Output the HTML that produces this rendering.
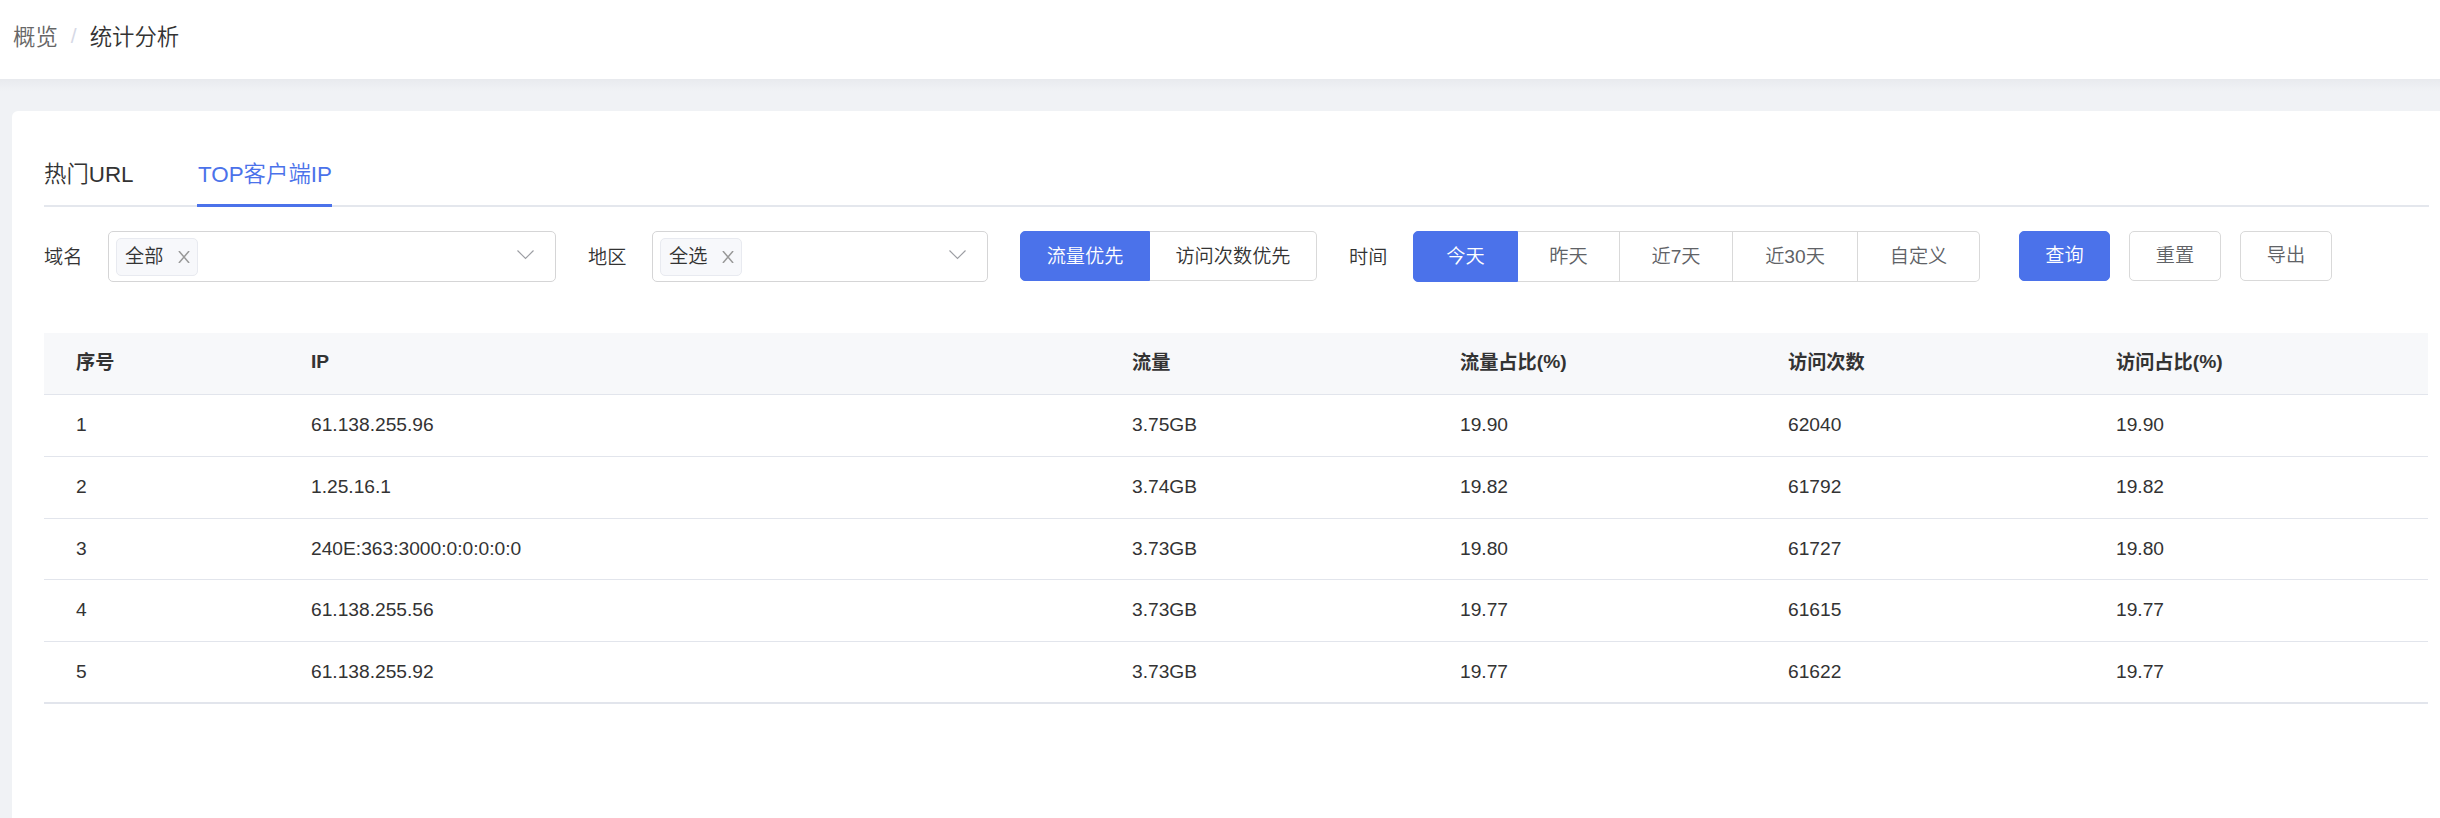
<!DOCTYPE html>
<html lang="zh-CN">
<head>
<meta charset="utf-8">
<title>统计分析</title>
<style>
*{box-sizing:border-box;margin:0;padding:0}
html,body{width:2440px;height:818px;overflow:hidden}
body{background:#f0f2f5;font-family:"Liberation Sans","Noto Sans CJK SC",sans-serif;font-weight:350;color:#333;position:relative}
.hdr{position:absolute;left:0;top:0;width:2440px;height:79px;background:#fff}
.hdr-shadow{position:absolute;left:0;top:79px;width:2440px;height:12px;background:linear-gradient(#e8eaee,#f0f2f5)}
.bc{position:absolute;left:13px;top:22px;height:32px;line-height:32px;font-size:22.4px;white-space:nowrap}
.bc .a{color:#666}
.bc .s{color:#d6d9e6;margin:0 13px 0 13px;font-size:21px;position:relative;top:-2px}
.bc .b{color:#333}
.card{position:absolute;left:12px;top:111px;width:2440px;height:720px;background:#fff;border-radius:6px}
.tabs{position:absolute;left:32px;top:31px;width:2385px;height:65px}
.tabs .line{position:absolute;left:0;bottom:0;width:100%;height:2px;background:#e4e7ed}
.tabs .bar{position:absolute;left:153px;bottom:0;width:135px;height:3px;background:#4b72ea}
.tab{position:absolute;top:15px;height:36px;line-height:36px;font-size:22.4px;white-space:nowrap}
.tab.t1{left:0;color:#333}
.tab.t2{left:154px;color:#4b72ea}
.filters{position:absolute;left:32px;top:120px;height:51px;width:2384px}
.lbl{position:absolute;top:1px;height:51px;line-height:51px;font-size:19.2px;color:#333;white-space:nowrap}
.sel{position:absolute;top:0;height:51px;border:1px solid #d5d5d6;border-radius:5px;background:#fff}
.tag{position:absolute;left:7px;top:6px;width:82px;height:38px;border:1px solid #e8eaf0;background:#f7f8fb;border-radius:5px;line-height:35px;font-size:19.2px;color:#333;padding:0 0 0 8px;white-space:nowrap}
.tag svg{position:absolute;left:61px;top:12px;width:12px;height:12px}
.arrow{position:absolute;right:19px;top:17px;width:20px;height:12px}
.grp{position:absolute;top:0;height:50px;display:flex}
.gbtn{height:50px;line-height:50px;border:1px solid #d9d9d9;border-left:none;font-size:19.2px;color:#333;text-align:center;background:#fff;white-space:nowrap}
.gbtn:first-child{border-left:1px solid #d9d9d9;border-radius:5px 0 0 5px}
.gbtn:last-child{border-radius:0 5px 5px 0}
.gbtn.on{background:#4b72ea;border-color:#4b72ea;color:#fff}
.grp.g2{height:51px}
.grp.g2 .gbtn{color:#606266;height:51px}
.grp.g2 .gbtn.on{color:#fff}
.btn{position:absolute;top:0;height:50px;line-height:48px;border:1px solid #d9d9d9;border-radius:5px;font-size:19.2px;color:#606266;text-align:center;background:#fff;white-space:nowrap}
.btn.pri{background:#4b72ea;border-color:#4b72ea;color:#fff}
.tbl{position:absolute;left:32px;top:222px;width:2384px;font-size:19.2px;color:#333}
.tr{position:relative;width:2384px;border-bottom:1px solid #e2e5ec;white-space:nowrap}
.tr span{position:absolute;top:0;height:100%}
.tr.h{height:62px;line-height:58px;background:#f7f8fa;font-weight:bold;color:#333}
.tr.h span i{font-style:normal;position:relative;top:1px}
.c1{left:32px}.c2{left:267px}.c3{left:1088px}.c4{left:1416px}.c5{left:1744px}.c6{left:2072px}
.r62{height:62px;line-height:59px}
.r61{height:61px;line-height:59px}
.tbl .end{width:2384px;height:1px;background:#e2e5ec}
</style>
</head>
<body>
<div class="hdr"></div>
<div class="hdr-shadow"></div>
<div class="bc"><span class="a">概览</span><span class="s">/</span><span class="b">统计分析</span></div>
<div class="card">
  <div class="tabs">
    <div class="line"></div>
    <div class="bar"></div>
    <div class="tab t1">热门URL</div>
    <div class="tab t2">TOP客户端IP</div>
  </div>
  <div class="filters">
    <div class="lbl" style="left:0">域名</div>
    <div class="sel" style="left:64px;width:448px">
      <div class="tag">全部<svg viewBox="0 0 12 12"><path d="M0.9 0 L11.1 12 M11.1 0 L0.9 12" fill="none" stroke="#999" stroke-width="1.5"/></svg></div>
      <svg class="arrow" viewBox="0 0 20 12"><path d="M1.5 1.5 L9.5 9.5 L17.5 1.5" fill="none" stroke="#9c9ea3" stroke-width="1.15"/></svg>
    </div>
    <div class="lbl" style="left:544px">地区</div>
    <div class="sel" style="left:608px;width:336px">
      <div class="tag">全选<svg viewBox="0 0 12 12"><path d="M0.9 0 L11.1 12 M11.1 0 L0.9 12" fill="none" stroke="#999" stroke-width="1.5"/></svg></div>
      <svg class="arrow" viewBox="0 0 20 12"><path d="M1.5 1.5 L9.5 9.5 L17.5 1.5" fill="none" stroke="#9c9ea3" stroke-width="1.15"/></svg>
    </div>
    <div class="grp" style="left:976px">
      <div class="gbtn on" style="width:130px">流量优先</div>
      <div class="gbtn" style="width:167px">访问次数优先</div>
    </div>
    <div class="lbl" style="left:1305px">时间</div>
    <div class="grp g2" style="left:1369px">
      <div class="gbtn on" style="width:105px">今天</div>
      <div class="gbtn" style="width:102px">昨天</div>
      <div class="gbtn" style="width:113px">近7天</div>
      <div class="gbtn" style="width:125px">近30天</div>
      <div class="gbtn" style="width:122px">自定义</div>
    </div>
    <div class="btn pri" style="left:1975px;width:91px">查询</div>
    <div class="btn" style="left:2085px;width:92px">重置</div>
    <div class="btn" style="left:2196px;width:92px">导出</div>
  </div>
  <div class="tbl">
    <div class="tr h"><span class="c1"><i>序号</i></span><span class="c2">IP</span><span class="c3"><i>流量</i></span><span class="c4"><i>流量占比</i>(%)</span><span class="c5"><i>访问次数</i></span><span class="c6"><i>访问占比</i>(%)</span></div>
    <div class="tr r62"><span class="c1">1</span><span class="c2">61.138.255.96</span><span class="c3">3.75GB</span><span class="c4">19.90</span><span class="c5">62040</span><span class="c6">19.90</span></div>
    <div class="tr r62"><span class="c1">2</span><span class="c2">1.25.16.1</span><span class="c3">3.74GB</span><span class="c4">19.82</span><span class="c5">61792</span><span class="c6">19.82</span></div>
    <div class="tr r61"><span class="c1">3</span><span class="c2">240E:363:3000:0:0:0:0:0</span><span class="c3">3.73GB</span><span class="c4">19.80</span><span class="c5">61727</span><span class="c6">19.80</span></div>
    <div class="tr r62"><span class="c1">4</span><span class="c2">61.138.255.56</span><span class="c3">3.73GB</span><span class="c4">19.77</span><span class="c5">61615</span><span class="c6">19.77</span></div>
    <div class="tr r61"><span class="c1">5</span><span class="c2">61.138.255.92</span><span class="c3">3.73GB</span><span class="c4">19.77</span><span class="c5">61622</span><span class="c6">19.77</span></div>
    <div class="end"></div>
  </div>
</div>
</body>
</html>
